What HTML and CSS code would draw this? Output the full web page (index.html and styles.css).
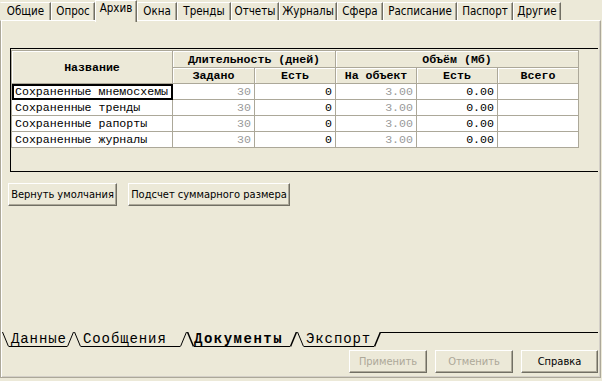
FILE: index.html
```html
<!DOCTYPE html>
<html lang="ru">
<head>
<meta charset="utf-8">
<title>Архив</title>
<link rel="stylesheet" href="styles.css">
</head>
<body>
<div class="window">
  <div class="tabs">
    <div class="tab">Общие</div>
    <div class="tab">Опрос</div>
    <div class="tab active">Архив</div>
    <div class="tab">Окна</div>
    <div class="tab">Тренды</div>
    <div class="tab">Отчеты</div>
    <div class="tab">Журналы</div>
    <div class="tab">Сфера</div>
    <div class="tab">Расписание</div>
    <div class="tab">Паспорт</div>
    <div class="tab">Другие</div>
  </div>
  <div class="panel">
    <div class="frame">
      <div class="grid">
        <div class="th th-name">Название</div>
        <div class="th th-span2">Длительность (дней)</div>
        <div class="th th-span3">Объём (Мб)</div>
        <div class="th">Задано</div>
        <div class="th">Есть</div>
        <div class="th">На объект</div>
        <div class="th">Есть</div>
        <div class="th">Всего</div>

        <div class="td name focus">Сохраненные мнемосхемы</div>
        <div class="td num dim">30</div>
        <div class="td num">0</div>
        <div class="td num dim">3.00</div>
        <div class="td num">0.00</div>
        <div class="td"></div>

        <div class="td name">Сохраненные тренды</div>
        <div class="td num dim">30</div>
        <div class="td num">0</div>
        <div class="td num dim">3.00</div>
        <div class="td num">0.00</div>
        <div class="td"></div>

        <div class="td name">Сохраненные рапорты</div>
        <div class="td num dim">30</div>
        <div class="td num">0</div>
        <div class="td num dim">3.00</div>
        <div class="td num">0.00</div>
        <div class="td"></div>

        <div class="td name">Сохраненные журналы</div>
        <div class="td num dim">30</div>
        <div class="td num">0</div>
        <div class="td num dim">3.00</div>
        <div class="td num">0.00</div>
        <div class="td"></div>
      </div>
    </div>

    <div class="actions">
      <button class="btn btn-reset">Вернуть умолчания</button>
      <button class="btn btn-calc">Подсчет суммарного размера</button>
    </div>

    <div class="tabset">
      <div class="bt">
        <svg class="slant" width="7" height="15" viewBox="0 0 7 15"><line x1="0.5" y1="0" x2="6.5" y2="14.5" stroke="#000" stroke-width="1"/></svg>
        <span class="bt-label">Данные</span>
        <svg class="slant" width="7" height="15" viewBox="0 0 7 15"><line x1="0.5" y1="14.5" x2="6.5" y2="0" stroke="#000" stroke-width="1"/></svg>
      </div>
      <div class="bt">
        <svg class="slant" width="7" height="15" viewBox="0 0 7 15"><line x1="0.5" y1="0" x2="6.5" y2="14.5" stroke="#000" stroke-width="1"/></svg>
        <span class="bt-label">Сообщения</span>
        <svg class="slant" width="7" height="15" viewBox="0 0 7 15"><line x1="0.5" y1="14.5" x2="6.5" y2="0" stroke="#000" stroke-width="1"/></svg>
      </div>
      <div class="bt bt-active">
        <svg class="slant" width="7" height="15" viewBox="0 0 7 15"><line x1="0.5" y1="0" x2="6.5" y2="14.5" stroke="#000" stroke-width="1.5"/></svg>
        <span class="bt-label">Документы</span>
        <svg class="slant" width="7" height="15" viewBox="0 0 7 15"><line x1="0.5" y1="14.5" x2="6.5" y2="0" stroke="#000" stroke-width="1.5"/></svg>
      </div>
      <div class="bt">
        <svg class="slant" width="7" height="15" viewBox="0 0 7 15"><line x1="0.5" y1="0" x2="6.5" y2="14.5" stroke="#000" stroke-width="1"/></svg>
        <span class="bt-label">Экспорт</span>
        <svg class="slant" width="7" height="15" viewBox="0 0 7 15"><line x1="0.5" y1="14.5" x2="6.5" y2="0" stroke="#000" stroke-width="1.5"/></svg>
      </div>
      <div class="bt-rest"></div>
    </div>

    <div class="footer">
      <button class="btn btn-foot" disabled>Применить</button>
      <button class="btn btn-foot" disabled>Отменить</button>
      <button class="btn btn-foot btn-help">Справка</button>
    </div>
  </div>
</div>
</body>
</html>
```

FILE: styles.css
```css
* {
  box-sizing: border-box;
}

html,
body {
  margin: 0;
  padding: 0;
}

body {
  width: 602px;
  height: 381px;
  overflow: hidden;
  background: #ECE9D8;
  font-family: "DejaVu Sans Condensed", "DejaVu Sans", sans-serif;
  font-size: 11px;
  color: #000;
}

.window {
  width: 602px;
  height: 381px;
}

/* ---------- top tabs ---------- */
.tabs {
  display: flex;
  height: 20px;
  position: relative;
  z-index: 2;
}

.tab {
  height: 18px;
  margin-top: 2px;
  display: flex;
  align-items: center;
  justify-content: center;
  padding-bottom: 2px;
  border-top: 1px solid #fff;
  border-left: 1px solid #fff;
  border-right: 1px solid #716F64;
  box-shadow: inset -1px 0 0 #ACA899;
  white-space: nowrap;
  font-size: 11.5px;
}

.tab.active {
  height: 22px;
  margin-top: 0;
  padding-bottom: 7px;
  background: #ECE9D8;
}

.tab:nth-child(1)  { width: 51px; border-left-color: transparent; }
.tab:nth-child(2)  { width: 44px; }
.tab:nth-child(3)  { width: 42px; }
.tab:nth-child(4)  { width: 40px; }
.tab:nth-child(5)  { width: 54px; }
.tab:nth-child(6)  { width: 48px; }
.tab:nth-child(7)  { width: 58px; }
.tab:nth-child(8)  { width: 46px; }
.tab:nth-child(9)  { width: 74px; }
.tab:nth-child(10) { width: 56px; }
.tab:nth-child(11) { width: 48px; }

/* ---------- page panel ---------- */
.panel {
  width: 601px;
  height: 358px;
  display: flex;
  flex-direction: column;
  border-top: 1px solid #fff;
  border-left: 1px solid #ACA899;
  border-right: 1px solid #ACA899;
  border-bottom: 1px solid #ACA899;
  box-shadow: inset 1px 0 0 #fff, inset -1px -1px 0 #D4D0C8;
  padding: 1px 2px 2px 1px;
}

/* ---------- frame + grid ---------- */
.frame {
  margin: 26px 0 0 8px;
  height: 124px;
  border-top: 1px solid #000;
  border-left: 1px solid #000;
  border-bottom: 1px solid #000;
  padding-top: 1px;
}

.grid {
  display: grid;
  grid-template-columns: 161px 82px 81px 81px 81px 81px;
  grid-template-rows: 17px 16px 16px 16px 16px 16px;
  width: max-content;
  border-top: 1px solid #ACA899;
  border-left: 1px solid #ACA899;
  font-family: "Liberation Mono", "DejaVu Sans Mono", monospace;
  font-size: 11.6px;
}

.th {
  display: flex;
  align-items: center;
  justify-content: center;
  font-weight: bold;
  font-size: 11.6px;
  background: #ECE9D8;
  border-right: 1px solid #ACA899;
  border-bottom: 1px solid #ACA899;
  box-shadow: inset 1px 1px 0 #fff;
  white-space: nowrap;
}

.th-name {
  grid-row: span 2;
}

.th-span2 {
  grid-column: span 2;
}

.th-span3 {
  grid-column: span 3;
}

.td {
  display: flex;
  align-items: center;
  background: #fff;
  border-right: 1px solid #ACA899;
  border-bottom: 1px solid #ACA899;
  white-space: nowrap;
  overflow: hidden;
}

.td.name {
  padding-left: 3px;
}

.td.num {
  justify-content: flex-end;
  padding-right: 3px;
}

.td.dim {
  color: #9A9A9A;
}

.td.focus {
  outline: 2px solid #000;
  outline-offset: -2px;
}

/* ---------- buttons ---------- */
.btn {
  font-family: "DejaVu Sans Condensed", "DejaVu Sans", sans-serif;
  font-size: 11px;
  color: #000;
  height: 23px;
  padding: 0;
  background: #ECE9D8;
  border: 1px solid;
  border-color: #fff #716F64 #716F64 #fff;
  box-shadow: inset -1px -1px 0 #ACA899;
  white-space: nowrap;
}

.btn:disabled {
  color: #ACA899;
}

.actions {
  display: flex;
  gap: 11px;
  margin: 11px 0 0 6px;
}

.btn-reset {
  width: 109px;
}

.btn-calc {
  width: 162px;
}

/* ---------- bottom tab set ---------- */
.tabset {
  margin-top: auto;
  display: flex;
  align-items: flex-start;
  height: 15px;
  font-family: "Liberation Mono", "DejaVu Sans Mono", monospace;
  font-size: 14px;
  letter-spacing: 0.9px;
}

.bt {
  display: flex;
  height: 15px;
}

.slant {
  display: block;
  flex: none;
}

.bt-label {
  display: block;
  height: 15px;
  line-height: 15px;
  border-bottom: 1px solid #000;
  padding-left: 2px;
  white-space: nowrap;
}

.bt:nth-child(1) .bt-label { width: 58px; }
.bt:nth-child(2) .bt-label { width: 99px; }
.bt:nth-child(3) .bt-label { width: 96px; }
.bt:nth-child(4) .bt-label { width: 70px; }

.bt-active .bt-label {
  font-weight: bold;
  letter-spacing: 1.5px;
  padding-left: 0;
}

.bt-rest {
  flex: 1;
  border-top: 1px solid #000;
}

/* ---------- footer ---------- */
.footer {
  display: flex;
  justify-content: flex-end;
  gap: 8px;
  margin-top: 3px;
  margin-bottom: 2px;
}

.btn-foot {
  width: 78px;
}

.btn-help {
  width: 77px;
}
```
